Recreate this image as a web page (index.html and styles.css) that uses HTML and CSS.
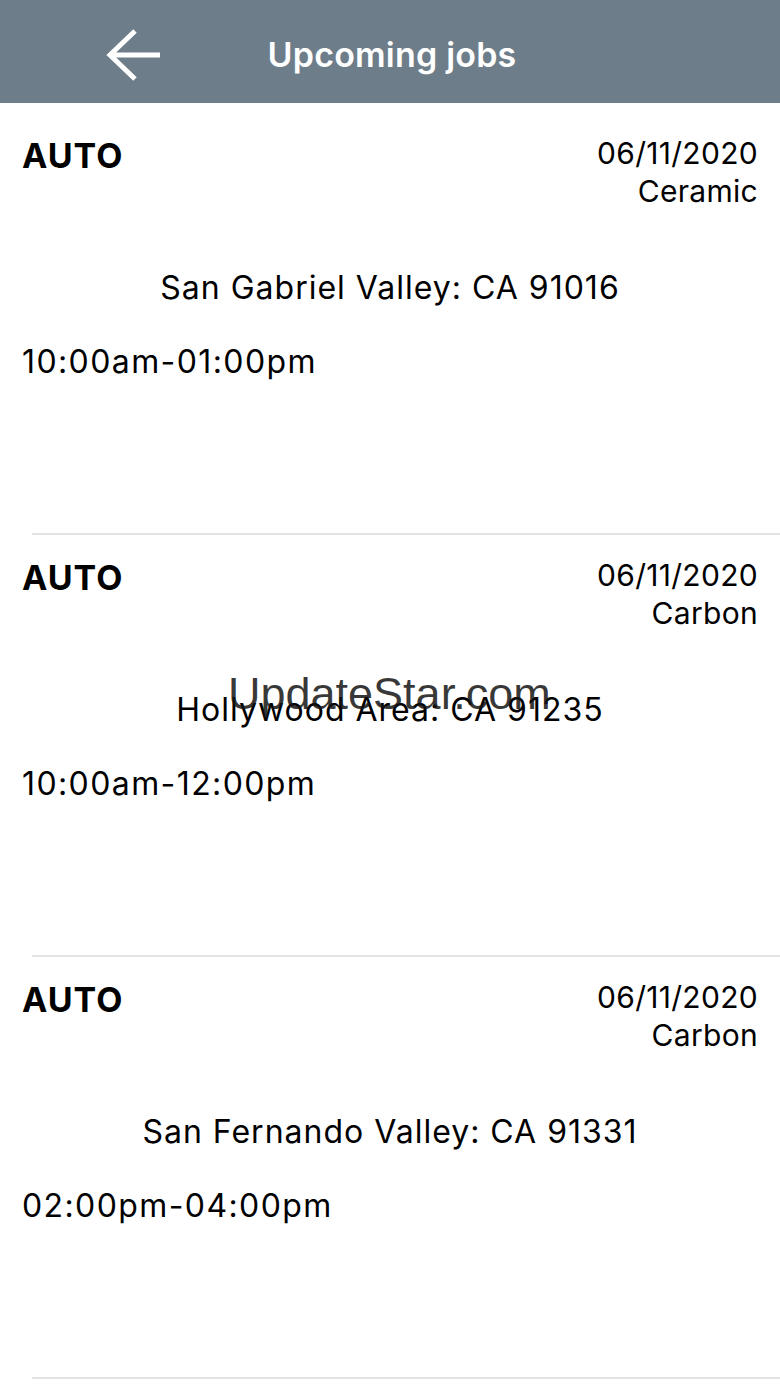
FILE: index.html
```html
<!DOCTYPE html>
<html lang="en">
  <head>
    <meta charset="UTF-8" />
    <meta name="viewport" content="width=device-width, initial-scale=1.0" />
    <title>Upcoming jobs</title>
    <link rel="stylesheet" href="styles.css">
  </head>
  <body>
    <header class="topbar">
      <a class="back" href="">
        <svg width="56" height="54" viewBox="0 0 56 54">
          <path d="M4 27 H54 M29 3 L4 27 L29 51" fill="none" stroke="#fff" stroke-width="5" />
        </svg>
      </a>
      <h1 class="title">Upcoming jobs</h1>
      <span></span>
    </header>

    <!--job list-->
    <ul class="jobs">
      <li class="job">
        <div class="job-top">
          <strong class="kind">AUTO</strong>
          <div class="meta">
            <div>06/11/2020</div>
            <div>Ceramic</div>
          </div>
        </div>
        <p class="place">San Gabriel Valley: CA 91016</p>
        <p class="time">10:00am-01:00pm</p>
      </li>
      <li class="job">
        <div class="job-top">
          <strong class="kind">AUTO</strong>
          <div class="meta">
            <div>06/11/2020</div>
            <div>Carbon</div>
          </div>
        </div>
        <p class="place">Hollywood Area: CA 91235</p>
        <p class="time">10:00am-12:00pm</p>
      </li>
      <li class="job">
        <div class="job-top">
          <strong class="kind">AUTO</strong>
          <div class="meta">
            <div>06/11/2020</div>
            <div>Carbon</div>
          </div>
        </div>
        <p class="place">San Fernando Valley: CA 91331</p>
        <p class="time">02:00pm-04:00pm</p>
      </li>
    </ul>

    <div class="watermark">UpdateStar.com</div>
  </body>
</html>
```

FILE: styles.css
```css
* {
  margin: 0;
  padding: 0;
  box-sizing: border-box;
}
body {
  font-family: Inter, "Liberation Sans", sans-serif;
  color: #000;
  background: #fff;
  position: relative;
}
ul,
li {
  list-style: none;
}

/* header */
.topbar {
  height: 103px;
  padding-top: 7px;
  background-color: #6e7d8a;
  display: grid;
  grid-template-columns: 1fr auto 1fr;
  align-items: center;
}
.back {
  display: block;
  padding-left: 106px;
  height: 54px;
}
.back svg {
  display: block;
}
.title {
  font-size: 34px;
  line-height: 40px;
  font-weight: 600;
  color: #fff;
  letter-spacing: 0.2px;
  padding-left: 4px;
}

/* list */
.jobs {
  padding-top: 10px;
}
.job {
  height: 422px;
  padding: 0 22px;
  display: flex;
  flex-direction: column;
}
/* separator line, starts a bit right of the text */
.job::after {
  content: "";
  margin-top: auto;
  margin-left: 10px;
  margin-right: -22px;
  border-bottom: 2px solid #e3e3e3;
}
.job-top {
  display: flex;
  justify-content: space-between;
  align-items: flex-start;
  padding-top: 21px;
}
.kind {
  margin-top: 2px;
  font-size: 34px;
  line-height: 40px;
  font-weight: 700;
  letter-spacing: 1px;
}
.meta {
  text-align: right;
  font-size: 30px;
  line-height: 38px;
  letter-spacing: 0.3px;
}
.place {
  margin-top: 58px;
  text-align: center;
  font-size: 32px;
  line-height: 40px;
  letter-spacing: 1px;
}
.time {
  margin-top: 34px;
  font-size: 32px;
  line-height: 40px;
  letter-spacing: 1.4px;
}

/* overlay */
.watermark {
  position: absolute;
  left: 228px;
  top: 671px;
  font-family: "Liberation Sans", sans-serif;
  font-size: 45px;
  line-height: 45px;
  color: rgba(20, 20, 20, 0.85);
}
```
